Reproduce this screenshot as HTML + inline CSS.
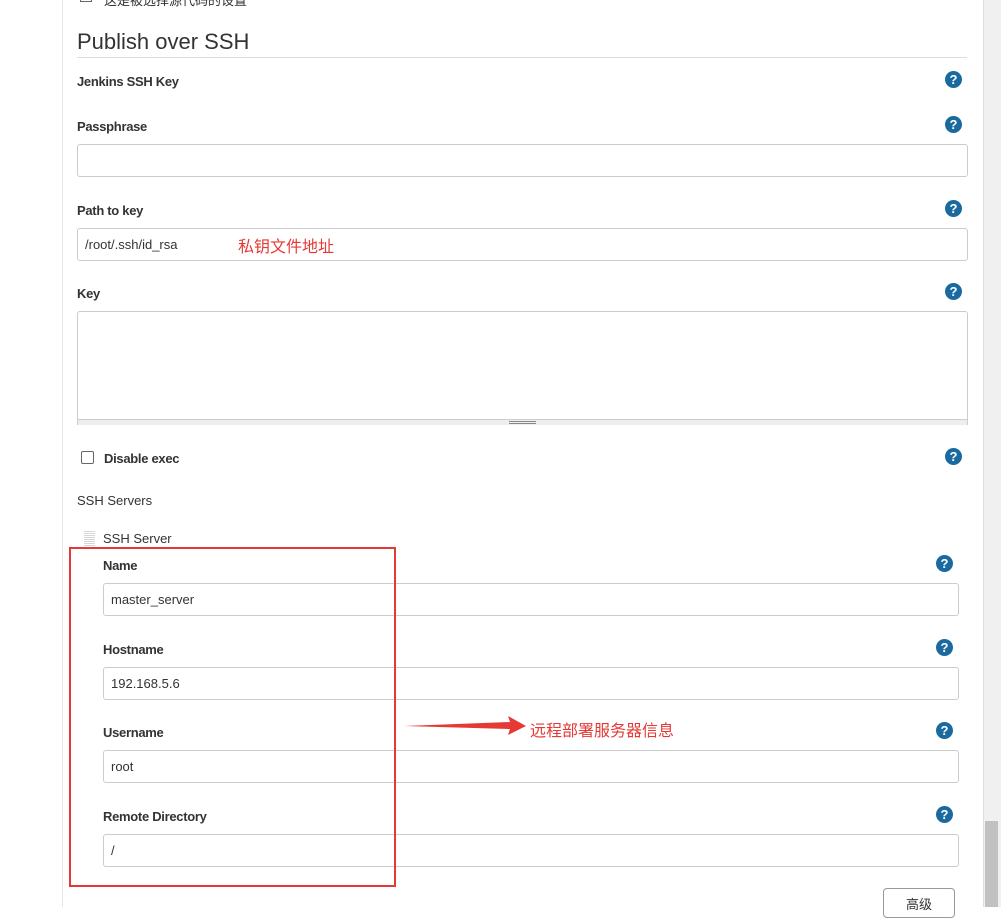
<!DOCTYPE html>
<html><head><meta charset="utf-8"><style>
*{margin:0;padding:0;box-sizing:border-box}
body{width:1001px;height:907px;overflow:hidden;background:#fff;font-family:"Liberation Sans","Noto Sans CJK SC",sans-serif;color:#333;position:relative}
.a{position:absolute}
.lbl{position:absolute;font-size:13px;font-weight:bold;color:#333;letter-spacing:-0.3px;margin-top:1px}
.inp{position:absolute;border:1px solid #ccc;border-radius:3px;background:#fff;font-size:13px;color:#333;padding-left:7px;line-height:32px}
.q{position:absolute;width:17px;height:17px;border-radius:50%;background:#1a6aa0;color:#fff;font-size:13px;font-weight:bold;text-align:center;line-height:17px}
.red{color:#e53935;font-family:"Noto Sans CJK SC",sans-serif;font-size:16px}
</style></head><body>
<div class="a" style="left:62px;top:0;width:1px;height:907px;background:#e6e6e6"></div>
<div class="a" style="left:983px;top:0;width:18px;height:907px;background:#f0f0f0;border-left:1px solid #ddd"></div>
<div class="a" style="left:985px;top:821px;width:13px;height:86px;background:#c1c1c1"></div>
<div class="a" style="left:80px;top:-6px;width:12px;height:8px;border:1px solid #666"></div>
<div class="a" style="left:104px;top:-10px;font-size:13px;color:#333">这是被选择源代码的设置</div>

<div class="a" style="left:77px;top:29px;font-size:22px;color:#333">Publish over SSH</div>
<div class="a" style="left:77px;top:57px;width:890px;height:1px;background:#ddd"></div>

<div class="lbl" style="left:77px;top:73px">Jenkins SSH Key</div>
<div class="q" style="left:945px;top:71px">?</div>

<div class="lbl" style="left:77px;top:118px">Passphrase</div>
<div class="q" style="left:945px;top:116px">?</div>
<div class="inp" style="left:77px;top:144px;width:891px;height:33px"></div>

<div class="lbl" style="left:77px;top:202px">Path to key</div>
<div class="q" style="left:945px;top:200px">?</div>
<div class="inp" style="left:77px;top:228px;width:891px;height:33px">/root/.ssh/id_rsa</div>
<div class="a red" style="left:238px;top:233px">私钥文件地址</div>

<div class="lbl" style="left:77px;top:285px">Key</div>
<div class="q" style="left:945px;top:283px">?</div>
<div class="inp" style="left:77px;top:311px;width:891px;height:114px;border-radius:3px 3px 0 0"></div>
<div class="a" style="left:78px;top:419px;width:889px;height:6px;background:#eee;border-top:1px solid #ccc"></div>
<div class="a" style="left:509px;top:421px;width:27px;height:1px;background:#888"></div>
<div class="a" style="left:509px;top:423px;width:27px;height:1px;background:#888"></div>

<div class="a" style="left:81px;top:451px;width:13px;height:13px;border:1px solid #666;border-radius:2px"></div>
<div class="lbl" style="left:104px;top:450px">Disable exec</div>
<div class="q" style="left:945px;top:448px">?</div>

<div class="a" style="left:77px;top:493px;font-size:13px;color:#333">SSH Servers</div>
<div class="a" style="left:84px;top:530px;width:11px;height:16px;background:repeating-linear-gradient(0deg,#ccc 0 1px,transparent 1px 2px),#fff;opacity:.8"></div>
<div class="a" style="left:103px;top:531px;font-size:13px;color:#333">SSH Server</div>

<div class="lbl" style="left:103px;top:557px">Name</div>
<div class="q" style="left:936px;top:555px">?</div>
<div class="inp" style="left:103px;top:583px;width:856px;height:33px">master_server</div>

<div class="lbl" style="left:103px;top:641px">Hostname</div>
<div class="q" style="left:936px;top:639px">?</div>
<div class="inp" style="left:103px;top:667px;width:856px;height:33px">192.168.5.6</div>

<div class="lbl" style="left:103px;top:724px">Username</div>
<div class="q" style="left:936px;top:722px">?</div>
<div class="inp" style="left:103px;top:750px;width:856px;height:33px">root</div>

<div class="lbl" style="left:103px;top:808px">Remote Directory</div>
<div class="q" style="left:936px;top:806px">?</div>
<div class="inp" style="left:103px;top:834px;width:856px;height:33px">/</div>

<div class="a" style="left:883px;top:888px;width:72px;height:30px;border:1px solid #999;border-radius:4px;background:#fff;font-size:13px;text-align:center;line-height:30px;font-family:'Noto Sans CJK SC',sans-serif">高级</div>

<div class="a" style="left:69px;top:547px;width:327px;height:340px;border:2px solid #e53935"></div>
<svg class="a" style="left:402px;top:715px" width="125" height="22"><polygon points="2,11 108,7 106,1 124,11 106,20 108,14" fill="#e53935"/></svg>
<div class="a red" style="left:530px;top:717px">远程部署服务器信息</div>
</body></html>
